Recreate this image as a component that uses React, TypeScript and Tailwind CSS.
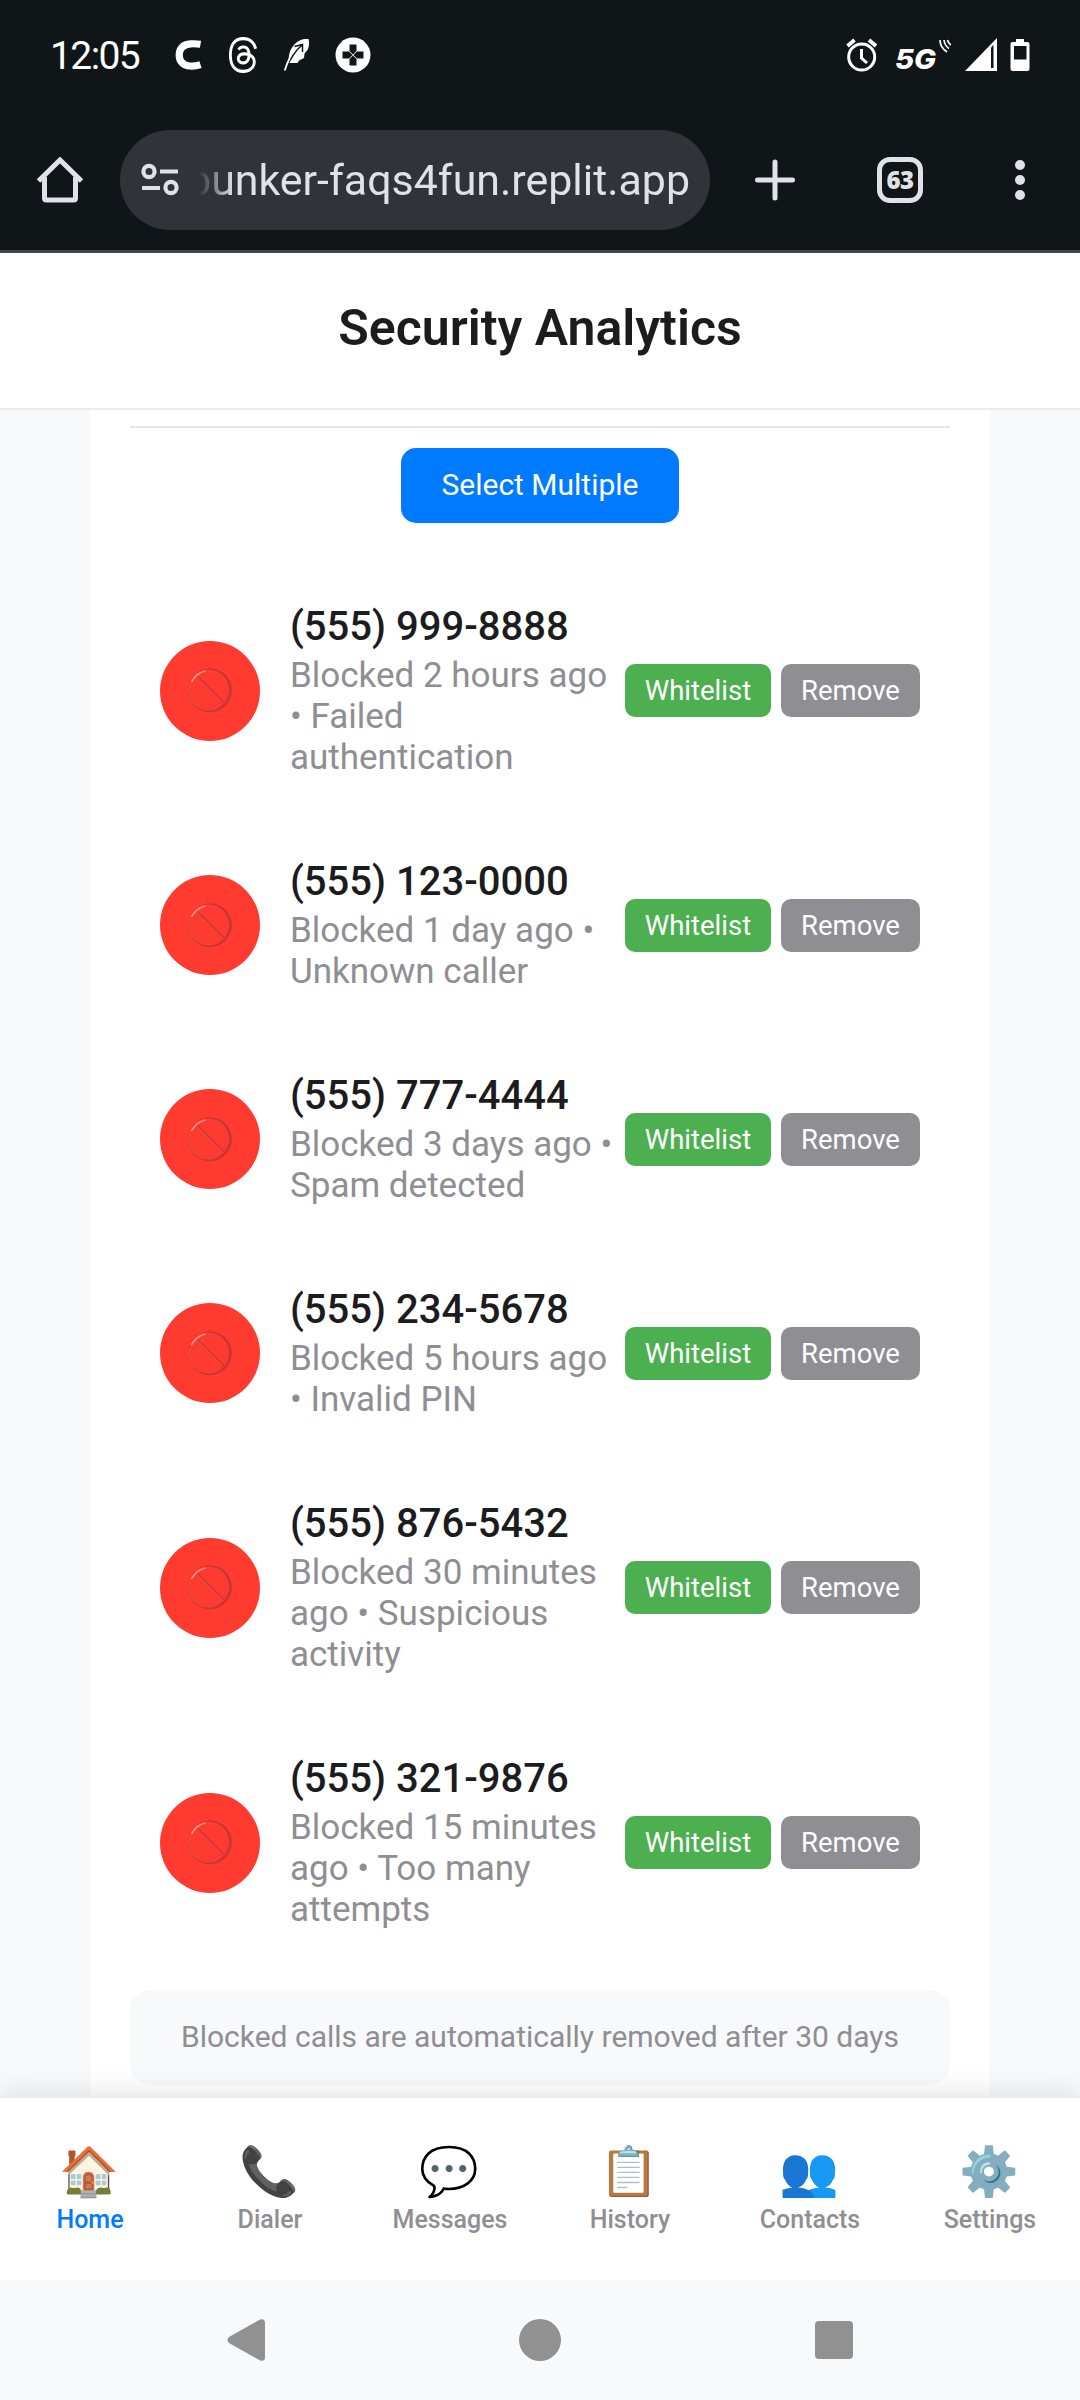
import { SiThreads } from "react-icons/si";

type Call = { number: string; lines: string[] };

const calls: Call[] = [
  { number: "(555) 999-8888", lines: ["Blocked 2 hours ago", "• Failed", "authentication"] },
  { number: "(555) 123-0000", lines: ["Blocked 1 day ago •", "Unknown caller"] },
  { number: "(555) 777-4444", lines: ["Blocked 3 days ago •", "Spam detected"] },
  { number: "(555) 234-5678", lines: ["Blocked 5 hours ago", "• Invalid PIN"] },
  { number: "(555) 876-5432", lines: ["Blocked 30 minutes", "ago • Suspicious", "activity"] },
  { number: "(555) 321-9876", lines: ["Blocked 15 minutes", "ago • Too many", "attempts"] },
];

const tabs = [
  { icon: "🏠", label: "Home", active: true },
  { icon: "📞", label: "Dialer", active: false },
  { icon: "💬", label: "Messages", active: false },
  { icon: "📋", label: "History", active: false },
  { icon: "👥", label: "Contacts", active: false },
  { icon: "⚙️", label: "Settings", active: false },
];

function StatusBar() {
  return (
    <div className="flex h-[110px] items-center pl-[50px] pr-[50px] text-white">
      <span className="w-[125px] pt-[2px] text-[39px] leading-[46px] font-['Roboto'] whitespace-nowrap tracking-[-1.6px]">12:05</span>
      <svg width="27" height="30" viewBox="0 0 27 30" className="shrink-0">
        <path d="M25.5 4.3C21 3.6 18 3.7 15.5 3.900C8 4.400 4.200 8.500 4.200 15C4.200 21.500 8 25.600 15 26C19 26.200 22.500 25.600 25.500 24.600" fill="none" stroke="#fff" strokeWidth="7.2" />
      </svg>
      <SiThreads className="ml-[25px] h-[36px] w-[32px] shrink-0" preserveAspectRatio="none" />
      <svg width="28" height="34" viewBox="0 0 28 34" className="ml-[25px] shrink-0">
        <path d="M5 25C4 18 6 11 10 7C14 2 19 0.5 24.5 1C25.6 5 25 9 23.5 12L20.5 15.5L20 20L15 22.5L13.5 25Z" fill="#fff" />
        <path d="M2 31C6 21 11 13 18.500 6.500M10.500 8.500L18.500 6.500L18.500 14" stroke="#101518" strokeWidth="1.500" fill="none" />
        <path d="M0.800 32.500C2 28 3.500 24.500 5.500 20.500" stroke="#fff" strokeWidth="1.800" fill="none" />
      </svg>
      <svg width="36" height="36" viewBox="0 0 36 36" className="ml-[23px] shrink-0">
        <circle cx="18" cy="18" r="17.5" fill="#fff" />
        <path d="M14.500 7.500H21.500V14L18 17.500L14.500 14ZM14.500 28.500H21.500V22L18 18.500L14.500 22ZM7.500 14.500V21.500H14L17.500 18L14 14.500ZM28.500 14.500V21.500H22L18.500 18L22 14.500Z" fill="#101518" />
      </svg>
      <svg width="32" height="34" viewBox="0 0 32 34" className="ml-auto shrink-0" fill="none" stroke="#fff">
        <circle cx="15.7" cy="19" r="13" strokeWidth="3" />
        <path d="M1.5 8L8.5 2M30 8L23 2" strokeWidth="3.8" />
        <path d="M15.5 11V20L21 25" strokeWidth="3" />
      </svg>
      <svg width="57" height="42" viewBox="0 0 57 42" className="ml-[16px] shrink-0">
        <text x="1" y="35" fill="#fff" fontFamily="Inter" fontSize="27.500" fontWeight="800" fontStyle="italic" textLength="41" lengthAdjust="spacingAndGlyphs">5G</text>
        <path d="M46 6C46 11 48.500 15 53 18M50 6C50.500 10 52 12.500 55 14.500M53.500 6C54 8 55 9.500 57 11" fill="none" stroke="#fff" strokeWidth="1.700" />
      </svg>
      <svg width="32" height="34" viewBox="0 0 32 34" className="ml-[14px] shrink-0">
        <path d="M32 0V33H0Z" fill="#fff" />
        <path d="M26 9.500L28.500 7V30H26Z" fill="#101518" />
      </svg>
      <svg width="20" height="34" viewBox="0 0 20 34" className="ml-[13px] shrink-0">
        <path d="M6 1H14V4H17.500Q19.500 4 19.500 6V31Q19.500 33 17.500 33H2.500Q0.500 33 0.500 31V6Q0.500 4 2.500 4H6Z" fill="#fff" />
        <rect x="4" y="8" width="12.500" height="13.500" fill="#101518" />
      </svg>
    </div>
  );
}

function BrowserBar() {
  return (
    <div className="flex h-[140px] items-center">
      <svg width="46" height="46" viewBox="0 0 46 46" className="ml-[37px] shrink-0" fill="none" stroke="#dfe2e7" strokeWidth="5">
        <path d="M1.500 24L23 3L44.500 24" />
        <path d="M7.500 20V41Q7.500 43 9.500 43H36.500Q38.500 43 38.500 41V20" />
      </svg>
      <div className="ml-[37px] flex h-[100px] w-[590px] shrink-0 items-center rounded-[50px] bg-[#303338]">
        <svg width="38" height="34" viewBox="0 0 38 34" className="ml-[21px] shrink-0" fill="none" stroke="#dfe2e7" strokeWidth="4.200">
          <circle cx="8" cy="8.500" r="5.600" />
          <path d="M19 8.500H37M1 25H19" />
          <circle cx="30" cy="24.500" r="5.600" />
        </svg>
        <div className="ml-[20px] flex h-[60px] w-[491px] justify-end overflow-hidden [mask-image:linear-gradient(to_right,transparent,black_34px)]">
          <span className="text-[42.9px] leading-[60px] font-['Roboto'] text-[#dfe2e7] whitespace-nowrap">bunker-faqs4fun.replit.app</span>
        </div>
      </div>
      <svg width="40" height="42" viewBox="0 0 40 42" className="ml-[45px] shrink-0" stroke="#dfe2e7" strokeWidth="5" strokeLinecap="round">
        <path d="M20 3V39M2.500 21H37.500" />
      </svg>
      <div className="ml-[82px] flex h-[46px] w-[46px] shrink-0 items-center justify-center rounded-[13px] border-[5px] border-[#dfe2e7] font-['Open_Sans'] text-[24px] leading-[36px] font-extrabold tracking-[-0.5px] text-[#dfe2e7]">63</div>
      <svg width="12" height="42" viewBox="0 0 12 42" className="ml-[91px] shrink-0" fill="#dfe2e7">
        <circle cx="6" cy="6" r="5" />
        <circle cx="6" cy="21" r="5" />
        <circle cx="6" cy="36" r="5" />
      </svg>
    </div>
  );
}

function CallRow({ call }: { call: Call }) {
  return (
    <div className="flex items-center px-[30px] py-[40px]">
      <div className="flex h-[100px] w-[100px] shrink-0 items-center justify-center rounded-full bg-[#ff3b30] text-[40px] leading-[47px]">🚫</div>
      <div className="ml-[30px] flex-1">
        <div className="text-[40px] leading-[47px] font-medium text-[#1c1c1e] whitespace-nowrap">{call.number}</div>
        <div className="mt-[5px] text-[35px] leading-[41px] text-[#8e8e93]">
          {call.lines.map((line) => (
            <div key={line} className="whitespace-nowrap">{line}</div>
          ))}
        </div>
      </div>
      <div className="flex shrink-0 gap-[10px]">
        <button className="h-[53px] w-[146px] rounded-[10px] bg-[#4caf50] text-[27.5px] leading-[53px] text-white">Whitelist</button>
        <button className="h-[53px] w-[139px] rounded-[10px] bg-[#8e8e93] text-[27.5px] leading-[53px] text-white">Remove</button>
      </div>
    </div>
  );
}

export default function App() {
  return (
    <div className="flex h-[2400px] w-[1080px] flex-col overflow-hidden bg-[#f8f9fb] font-['Roboto',sans-serif]">
      <div className="h-[253px] shrink-0 border-b-[3px] border-[#43474e] bg-[#101518]">
        <StatusBar />
        <BrowserBar />
      </div>
      <header className="flex h-[157px] shrink-0 items-center justify-center border-b-2 border-[#ebebeb] bg-white pb-[5px]">
        <h1 className="text-[50px] leading-[60px] font-semibold text-[#1c1c1e]">Security Analytics</h1>
      </header>
      <main className="mx-[90px] h-[1686px] shrink-0 overflow-hidden bg-white px-[40px] pt-[16px]">
        <div className="flex flex-col items-center border-t-2 border-[#e5e5ea] pt-[20px]">
          <button className="h-[75px] w-[278px] rounded-[15px] bg-[#007aff] pb-[2px] text-[30px] leading-[35px] text-white">Select Multiple</button>
        </div>
        <div className="pt-[40px]">
          {calls.map((call) => (
            <CallRow key={call.number} call={call} />
          ))}
        </div>
        <div className="mt-[20px] rounded-[20px] bg-[#f8f9fb] px-[30px] pt-[29px] pb-[31px] text-center text-[30px] leading-[35px] text-[#8e8e93]">
          Blocked calls are automatically removed after 30 days
        </div>
      </main>
      <nav className="relative grid h-[184px] shrink-0 grid-cols-6 border-t-2 border-[#ebebeb] bg-white shadow-[0_-5px_25px_rgba(0,0,0,0.1)]">
        {tabs.map((tab) => (
          <div key={tab.label} className="flex flex-col items-center pt-[44px]">
            <span className="pr-[2px] text-[48px] leading-[60px]">{tab.icon}</span>
            <span className={tab.active ? "mt-[3px] text-[25px] leading-[29px] font-medium text-[#007aff]" : "mt-[3px] text-[25px] leading-[29px] font-medium text-[#8e8e93]"}>{tab.label}</span>
          </div>
        ))}
      </nav>
      <div className="relative flex h-[120px] shrink-0 items-center bg-[#f8f9fb]">
        <svg width="38" height="44" viewBox="0 0 38 44" className="ml-[227px]" fill="#919191">
          <path d="M33 1.500L2 19Q-1 22 2 25L33 42.500Q38 44 38 39V5Q38 0 33 1.500Z" />
        </svg>
        <div className="ml-[254px] h-[42px] w-[42px] rounded-full bg-[#919191]" />
        <div className="ml-[254px] h-[38px] w-[38px] rounded-[4px] bg-[#919191]" />
      </div>
    </div>
  );
}
